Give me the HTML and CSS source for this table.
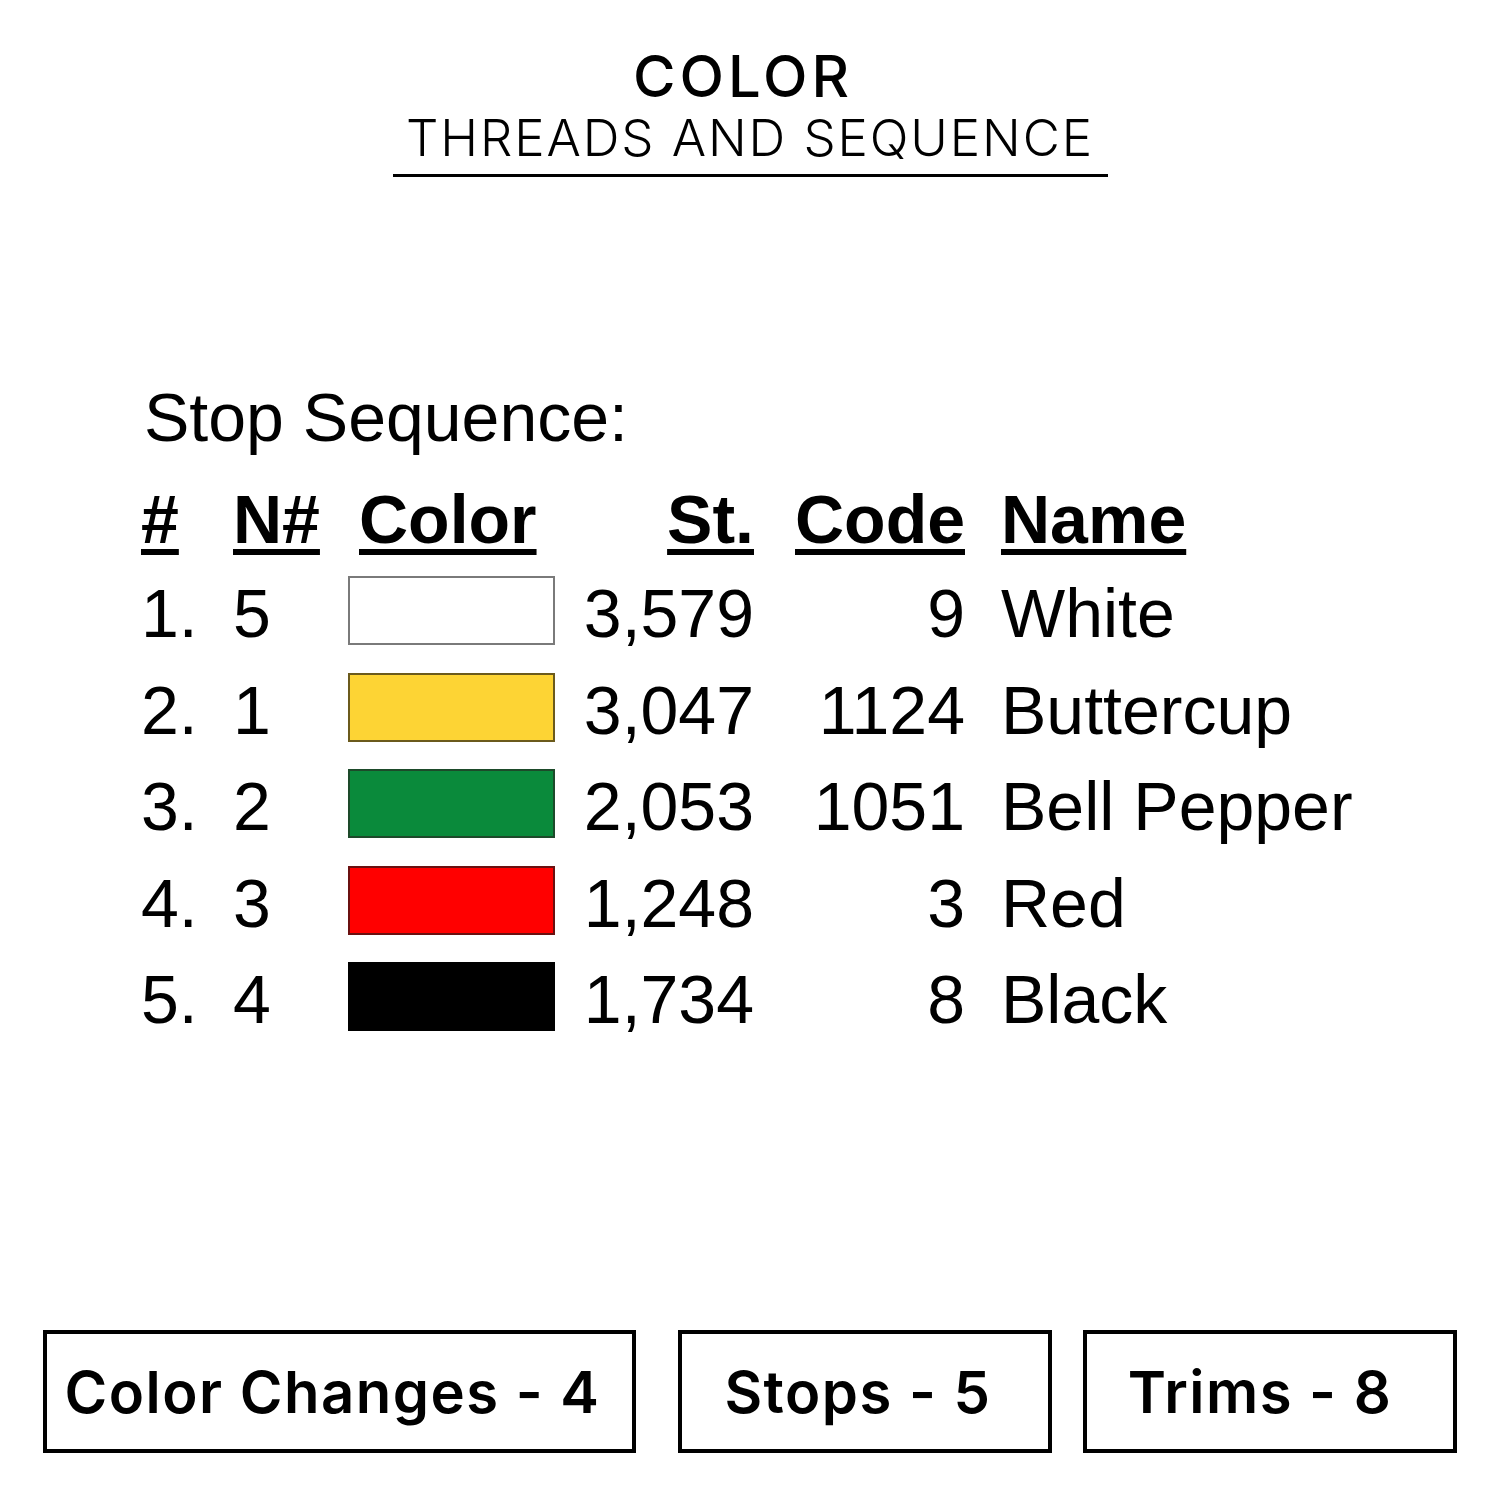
FILE: index.html
```html
<!DOCTYPE html>
<html>
<head>
<meta charset="utf-8">
<link rel="stylesheet" href="styles.css">
</head>
<body>
<div class="page">
  <header class="head">
    <div class="title">COLOR</div>
    <div class="subtitle">THREADS AND SEQUENCE</div>
  </header>

  <section class="seq">
    <div class="seq-title">Stop Sequence:</div>
    <div class="grid">
      <div class="hd c1"><span>#</span></div>
      <div class="hd c2"><span>N#</span></div>
      <div class="hd c3"><span>Color</span></div>
      <div class="hd c4"><span>St.</span></div>
      <div class="hd c5"><span>Code</span></div>
      <div class="hd c6"><span>Name</span></div>

      <div class="cell c1">1.</div>
      <div class="cell c2">5</div>
      <div class="cell c3"><div class="sw white"></div></div>
      <div class="cell c4">3,579</div>
      <div class="cell c5">9</div>
      <div class="cell c6">White</div>

      <div class="cell c1">2.</div>
      <div class="cell c2">1</div>
      <div class="cell c3"><div class="sw yellow"></div></div>
      <div class="cell c4">3,047</div>
      <div class="cell c5">1124</div>
      <div class="cell c6">Buttercup</div>

      <div class="cell c1">3.</div>
      <div class="cell c2">2</div>
      <div class="cell c3"><div class="sw green"></div></div>
      <div class="cell c4">2,053</div>
      <div class="cell c5">1051</div>
      <div class="cell c6">Bell Pepper</div>

      <div class="cell c1">4.</div>
      <div class="cell c2">3</div>
      <div class="cell c3"><div class="sw red"></div></div>
      <div class="cell c4">1,248</div>
      <div class="cell c5">3</div>
      <div class="cell c6">Red</div>

      <div class="cell c1">5.</div>
      <div class="cell c2">4</div>
      <div class="cell c3"><div class="sw black"></div></div>
      <div class="cell c4">1,734</div>
      <div class="cell c5">8</div>
      <div class="cell c6">Black</div>
    </div>
  </section>

  <footer class="stats">
    <div class="box box-wide">Color Changes - 4</div>
    <div class="box box-mid">Stops - 5</div>
    <div class="box box-last">Trims - 8</div>
  </footer>
</div>
</body>
</html>
```

FILE: styles.css
```css
html, body {
  margin: 0;
  padding: 0;
  background: #ffffff;
}

.page {
  width: 1500px;
  height: 1500px;
  position: relative;
  overflow: hidden;
  color: #000;
}

/* ---------- heading ---------- */
.head {
  display: flex;
  flex-direction: column;
  align-items: center;
  padding-top: 47px;
}

.title {
  font-family: "Inter", "DejaVu Sans", sans-serif;
  font-weight: 500;
  font-size: 58px;
  line-height: 58px;
  letter-spacing: 4px;
  margin-left: -14px;
}

.subtitle {
  font-family: "Inter", "DejaVu Sans", sans-serif;
  font-weight: 300;
  font-size: 51px;
  line-height: 58px;
  letter-spacing: 1.9px;
  width: 715px;
  text-align: center;
  border-bottom: 3.5px solid #000;
  padding-bottom: 7px;
  margin-top: 4px;
}

/* ---------- stop sequence ---------- */
.seq {
  margin-top: 190px;
  padding-left: 141px;
  font-family: "Liberation Sans", Arial, sans-serif;
  font-size: 68px;
}

.seq-title {
  height: 100px;
  line-height: 100px;
  padding-left: 3px;
}

.grid {
  display: grid;
  grid-template-columns: 92px 115px 207px 201px 211px 400px;
  grid-template-rows: 92px repeat(5, 96.5px);
  margin-top: 6px;
}

.hd {
  font-weight: 700;
  line-height: 92px;
  white-space: nowrap;
}

.hd span {
  text-decoration: underline;
  text-decoration-thickness: 6px;
  text-underline-offset: 6px;
}

.cell {
  line-height: 96.5px;
  white-space: nowrap;
}

.c1 { padding-left: 0; }
.c2 { padding-left: 0; }
.hd.c3 { padding-left: 11px; }
.c4 { text-align: right; padding-right: 2px; }
.c5 { text-align: right; padding-right: 2px; }
.c6 { padding-left: 34px; }

.cell.c3 {
  display: flex;
  align-items: flex-start;
}

.sw {
  width: 207px;
  height: 69px;
  margin-top: 11px;
  box-sizing: border-box;
  border: 2px solid #3a3a3a;
}

.sw.white  { background: #ffffff; border-color: #7a7a7a; }
.sw.yellow { background: #fdd434; border-color: #6b5a1c; }
.sw.green  { background: #0a8a3b; border-color: #1d4a2a; }
.sw.red    { background: #ff0000; border-color: #6a1010; }
.sw.black  { background: #000000; border-color: #000000; }

/* ---------- bottom stats ---------- */
.stats {
  display: flex;
  position: absolute;
  left: 0;
  top: 1330px;
  padding-left: 43px;
}

.box {
  box-sizing: border-box;
  height: 123px;
  border: 4.5px solid #000;
  display: flex;
  align-items: center;
  justify-content: center;
  padding-right: 14px;
  font-family: "Inter", "DejaVu Sans", sans-serif;
  font-weight: 600;
  font-size: 58px;
  letter-spacing: 1.5px;
  white-space: nowrap;
}

.box-wide { width: 593px; }
.box-mid  { width: 374px; margin-left: 42px; }
.box-last { width: 374px; margin-left: 31px; padding-right: 20px; }
```
